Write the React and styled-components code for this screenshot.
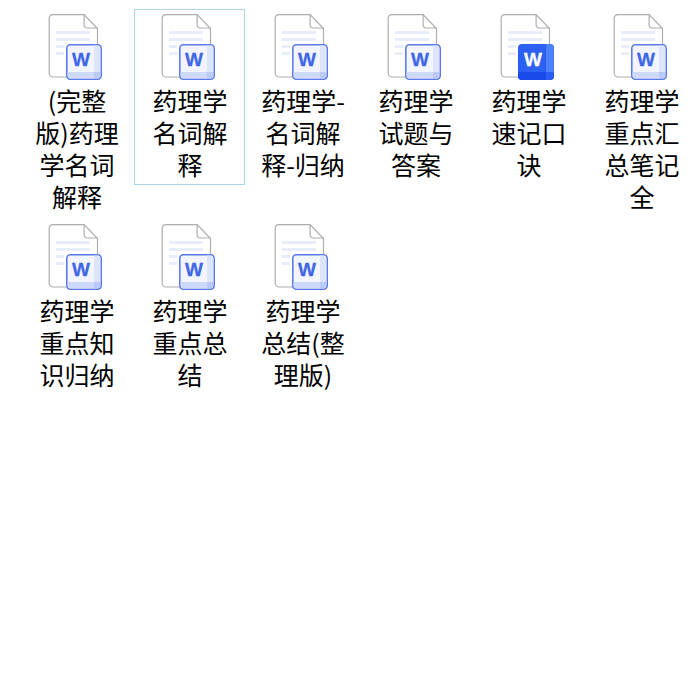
import React from 'react';
import styled, { createGlobalStyle } from 'styled-components';

const GlobalStyle = createGlobalStyle`
	html, body {
		margin: 0;
		background: #fff;
	}
`;

const Grid = styled.div`
	display: grid;
	grid-template-columns: repeat(6, 111px);
	column-gap: 2px;
	row-gap: 2px;
	align-items: start;
	padding: 9px 0 0 21px;
`;

const Tile = styled.div`
	box-sizing: border-box;
	display: flex;
	flex-direction: column;
	align-items: center;
	padding: 4px 9.5px 4px 10.5px;
	border: 1px solid ${props => (props.$selected ? '#a9d6e8' : 'transparent')};
`;

const Label = styled.div`
	width: 100%;
	margin-top: 4px;
	font-family: "Noto Sans CJK SC", "Liberation Sans", sans-serif;
	font-size: 25px;
	line-height: 32px;
	color: #000;
	text-align: center;
	word-break: break-all;
`;

const Icon = styled.svg`
	display: block;
	flex: none;
	margin-right: 4px;
`;

const lines = [18, 25, 32, 39];
const widths = [34, 34, 8, 8];

const WordIcon = ({ solid }) => (
	<Icon width="54" height="66" viewBox="0 0 54 66">
		<g transform="translate(.6 0)">
			<path
				d="M4.500 .6H35.500L48.900 14.500V59a4 4 0 0 1-4 4H4.500A4 4 0 0 1 .6 59V4.500A4 4 0 0 1 4.500 .6Z"
				fill="#fff"
				stroke="#adadb0"
				strokeWidth="1.200"
			/>
			<path d="M35.500 .6V11a3 3 0 0 0 3 3H48.900" fill="none" stroke="#adadb0" strokeWidth="1.200" />
		</g>
		{lines.map((y, i) => (
			<rect key={y} x="8" y={y - 1} width={widths[i]} height="3" fill="#e8edfb" />
		))}
		{solid ? (
			<g>
				<rect x="18" y="30" width="36" height="36" rx="4" fill="#2c60f2" />
				<path d="M46 30h4a4 4 0 0 1 4 4v24h-8Z" fill="#4a80f8" />
				<path d="M18 58h28v8H22a4 4 0 0 1-4-4Z" fill="#1b4aea" />
				<path d="M46 58h8v4a4 4 0 0 1-4 4h-4Z" fill="#2a5cf0" />
			</g>
		) : (
			<g>
				<rect x="18.800" y="30.800" width="34.400" height="34.400" rx="3.500" fill="#f3f5fe" stroke="#5a7cea" strokeWidth="1.600" />
				<path d="M46 31.600h4a2.700 2.700 0 0 1 2.400 2.700V58H46Z" fill="#dde4fc" />
				<path d="M19.600 58H46v6.400H22.300a2.700 2.700 0 0 1-2.700-2.700Z" fill="#cfd9fb" />
				<path d="M46 58h6.400v3.700a2.700 2.700 0 0 1-2.700 2.700H46Z" fill="#bccafa" />
			</g>
		)}
		<text
			x="33"
			y="52"
			textAnchor="middle"
			fontFamily="Liberation Sans"
			fontWeight="700"
			fontSize="19"
			stroke={solid ? '#fff' : '#3f67e4'}
			strokeWidth=".3"
			fill={solid ? '#fff' : '#3f67e4'}
		>
			W
		</text>
	</Icon>
);

const files = [
	{ name: '(完整版)药理学名词解释' },
	{ name: '药理学名词解释', selected: true },
	{ name: '药理学-名词解释-归纳' },
	{ name: '药理学试题与答案' },
	{ name: '药理学速记口诀', solid: true },
	{ name: '药理学重点汇总笔记全' },
	{ name: '药理学重点知识归纳' },
	{ name: '药理学重点总结' },
	{ name: '药理学总结(整理版)' },
];

const App = () => (
	<>
		<GlobalStyle />
		<Grid>
			{files.map(file => (
				<Tile key={file.name} $selected={file.selected}>
					<WordIcon solid={file.solid} />
					<Label>{file.name}</Label>
				</Tile>
			))}
		</Grid>
	</>
);

export default App;
